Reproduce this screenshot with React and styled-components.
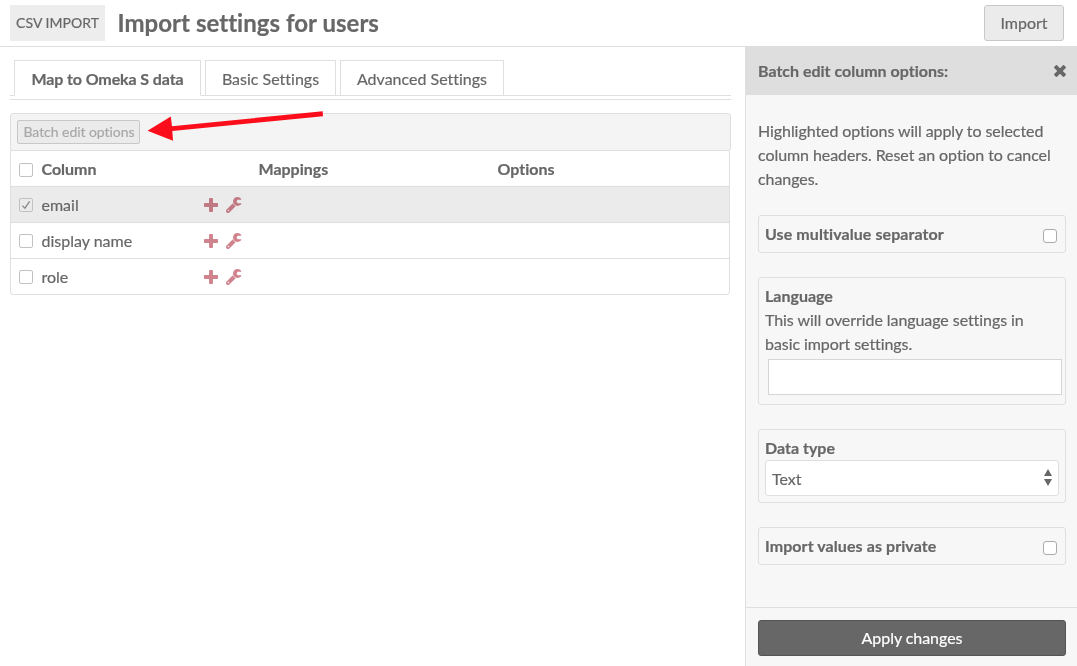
import React from 'react';
import styled, { createGlobalStyle, css } from 'styled-components';

const line = '#dfdfdf';
const ink = '#676767';

const heavy = css`
  font-weight: 700;
  letter-spacing: ${(p) => p.$track || 0}px;
`;

const GlobalStyle = createGlobalStyle`
  *, *::before, *::after { box-sizing: border-box; }
  body {
    margin: 0;
    background: #fff;
    color: ${ink};
    font: 16px/24px Lato, sans-serif;
    font-variant-ligatures: none;
    -webkit-text-stroke: 0.2px currentColor;
    overflow: hidden;
  }
  button, input { font: inherit; color: inherit; font-variant-ligatures: none; }
  h1, h2, p { margin: 0; }
`;

const Page = styled.div`
  display: flex;
  flex-direction: column;
  height: 666px;
`;

const Header = styled.header`
  display: flex;
  align-items: flex-start;
  height: 46px;
  padding: 5px 13px 0 10px;
`;

const SectionTag = styled.span`
  width: 95px;
  height: 36px;
  background: #ededed;
  font-size: 14px;
  line-height: 36px;
  letter-spacing: 0.03px;
  text-align: center;
  white-space: nowrap;
`;

const Title = styled.h1`
  flex: 1;
  margin-left: 12.5px;
  font-size: 24px;
  line-height: 36px;
  letter-spacing: 0.03px;
`;

const Button = styled.button`
  width: 80px;
  height: 36px;
  padding: 0;
  border: 1px solid #c8c8c8;
  border-radius: 3px;
  background: #ebebeb;
`;

const Body = styled.div`
  display: flex;
  flex: 1;
  min-height: 0;
`;

const Main = styled.main`
  flex: none;
  width: 745px;
  padding: 13px 14px 0 10px;
  border-top: 1px solid ${line};
`;

const Tabs = styled.nav`
  display: flex;
  gap: 4px;
  height: 36px;
  padding-left: 4px;
  box-shadow: inset 0 -1px ${line};
`;

const Tab = styled.a`
  width: ${(p) => p.$width}px;
  padding-top: 6px;
  border: 1px solid ${line};
  border-bottom-color: ${(p) => (p.$active ? '#fff' : line)};
  text-align: center;
  white-space: nowrap;
  ${(p) => p.$active && heavy}
`;

const Rule = styled.div`
  height: 1px;
  margin: 3px 0 13px;
  background: ${line};
`;

const BatchBar = styled.div`
  height: 38px;
  padding: 6px;
  border: 1px solid ${line};
  border-radius: 3px;
  background: #f4f4f4;
  display: flex;
  position: relative;
`;

const BatchButton = styled.button`
  width: 123px;
  height: 24px;
  padding: 0 0 0 1px;
  border: 1px solid #c8c8c8;
  border-radius: 2px;
  background: #ebebeb;
  color: #a8a8a8;
  font-size: 14px;
  line-height: 22px;
  letter-spacing: -0.05px;
`;

const Arrow = styled.svg`
  position: absolute;
  left: 134px;
  top: -6px;
`;

const Table = styled.div`
  width: 720px;
  margin-top: -1px;
  border: 1px solid ${line};
  border-radius: 0 0 3px 3px;
  position: relative;
`;

const Box = styled.span`
  display: flex;
  align-items: center;
  justify-content: center;
  width: 14px;
  height: 14px;
  margin-top: 1px;
  border: 1px solid ${(p) => (p.$strong ? '#aaa' : '#c2c2c2')};
  border-radius: ${(p) => (p.$strong ? 3 : 2)}px;
  background: ${(p) => (p.$dim ? 'transparent' : '#fff')};
  color: #8a8a8a;
`;

const Row = styled.div`
  display: grid;
  grid-template-columns: 193px 54.5px 239px 1fr;
  align-items: center;
  height: 36px;
  background: ${(p) => (p.$selected ? '#ebebeb' : 'transparent')};
  ${(p) => p.$head && heavy}

  & + & {
    border-top: 1px solid ${line};
  }
  &:first-child {
    height: 35px;
  }
  &:first-child ${Box} {
    margin-top: 2px;
  }
`;

const NameCell = styled.label`
  display: flex;
  align-items: center;
  gap: 8.5px;
  padding-left: 8px;
`;

const Actions = styled.span`
  display: flex;
  align-items: center;
  gap: 8px;
  color: #d1838d;
  mix-blend-mode: multiply;
`;

const Sidebar = styled.aside`
  flex: 1;
  min-width: 0;
  display: flex;
  flex-direction: column;
  border-left: 1px solid ${line};
  background: #f7f7f7;
`;

const SideHeader = styled.div`
  display: flex;
  align-items: center;
  justify-content: space-between;
  height: 49px;
  padding: 0 11px 0 12px;
  background: #dedede;
`;

const SideTitle = styled.h2`
  font-size: 16px;
  line-height: 24px;
  ${heavy}
`;

const SideContent = styled.div`
  flex: 1;
  padding: 24px 11px 0 12px;
`;

const Note = styled.p`
  letter-spacing: -0.07px;
`;

const Intro = styled(Note)`
  margin-bottom: 24px;
`;

const Field = styled.div`
  height: ${(p) => p.$height}px;
  margin-bottom: 24px;
  padding: 6px;
  border: 1px solid ${line};
  border-radius: 3px;
`;

const InlineField = styled(Field)`
  display: flex;
  justify-content: space-between;
  padding-right: 8px;

  ${Box} {
    margin-top: 7px;
  }
`;

const Label = styled.div`
  ${heavy}
`;

const TextInput = styled.input`
  display: block;
  width: 294px;
  height: 36px;
  margin: 3px 0 0 3px;
  border: 1px solid #d5d5d5;
  background: #fff;
`;

const Select = styled.div`
  display: flex;
  align-items: center;
  justify-content: space-between;
  width: 294px;
  height: 36px;
  padding: 2px 6px 0;
  border: 1px solid ${line};
  border-radius: 3px;
  background: #fff;

  svg {
    margin-top: -3px;
  }
`;

const SideFooter = styled.div`
  height: 59px;
  padding: 12px 11px 0 12px;
  border-top: 1px solid ${line};
`;

const ApplyButton = styled(Button)`
  width: 100%;
  border-color: #555;
  background: #676767;
  color: #fff;
  letter-spacing: -0.05px;
`;

const PlusIcon = () => (
  <svg width="14" height="16" viewBox="0 0 448 512" fill="currentColor">
    <path d="M448 294.2v-76.4c0-13.3-10.7-24-24-24H286.2V56c0-13.3-10.7-24-24-24h-76.4c-13.3 0-24 10.7-24 24v137.8H24c-13.3 0-24 10.7-24 24v76.4c0 13.3 10.7 24 24 24h137.8V456c0 13.3 10.7 24 24 24h76.4c13.3 0 24-10.7 24-24V318.2H424c13.3 0 24-10.7 24-24z" />
  </svg>
);

const WrenchIcon = () => (
  <svg width="16" height="16" viewBox="0 0 512 512" fill="currentColor">
    <path d="M481.156 200c9.3 0 15.12 10.155 10.325 18.124C466.295 259.992 420.419 288 368 288c-79.222 0-143.501-63.974-143.997-143.079C223.505 65.469 288.548-.001 368.002 0c52.362.001 98.196 27.949 123.4 69.743C496.24 77.766 490.523 88 481.154 88H376l-40 56 40 56h105.156zm-171.649 93.003L109.255 493.255c-24.994 24.993-65.515 24.994-90.51 0-24.993-24.994-24.993-65.516 0-90.51L218.991 202.5c16.16 41.197 49.303 74.335 90.516 90.503zM104 432c0-13.255-10.745-24-24-24s-24 10.745-24 24 10.745 24 24 24 24-10.745 24-24z" />
  </svg>
);

const CloseIcon = () => (
  <svg width="12" height="16" viewBox="0 0 384 512" fill="currentColor">
    <path d="M323.1 441l53.9-53.9c9.4-9.4 9.4-24.5 0-33.9L279.8 256l97.2-97.2c9.4-9.4 9.4-24.5 0-33.9L323.1 71c-9.4-9.4-24.5-9.4-33.9 0L192 168.2 94.8 71c-9.4-9.4-24.5-9.4-33.9 0L7 124.9c-9.4 9.4-9.4 24.5 0 33.9l97.2 97.2L7 353.2c-9.4 9.4-9.4 24.5 0 33.9L60.9 441c9.4 9.4 24.5 9.4 33.9 0l97.2-97.2 97.2 97.2c9.3 9.3 24.5 9.3 33.9 0z" />
  </svg>
);

const CheckIcon = () => (
  <svg width="10" height="10" viewBox="0 0 10 10" fill="none" stroke="currentColor" strokeWidth="1.3">
    <path d="M1.4 5.6 3.9 8.2 8.6 1.4" />
  </svg>
);

const SortIcon = () => (
  <svg width="8" height="17" viewBox="0 0 8 17" fill="currentColor">
    <path d="M4 0 8 7H0zM0 10h8l-4 7z" />
  </svg>
);

const columns = [
  { name: 'email', selected: true },
  { name: 'display name' },
  { name: 'role' },
];

export default function App() {
  return (
    <Page>
      <GlobalStyle />
      <Header>
        <SectionTag>CSV IMPORT</SectionTag>
        <Title>Import settings for users</Title>
        <Button>Import</Button>
      </Header>
      <Body>
        <Main>
          <Tabs>
            <Tab $active $width={187} $track={-0.1}>Map to Omeka S data</Tab>
            <Tab $width={131}>Basic Settings</Tab>
            <Tab $width={164}>Advanced Settings</Tab>
          </Tabs>
          <Rule />
          <BatchBar>
            <BatchButton disabled>Batch edit options</BatchButton>
            <Arrow width="180" height="35" viewBox="145 108 180 35">
              <path d="M322.7 111.3 172 126.2 170.8 116.4 147.5 130.8 173 140.8 172.3 131 323 116.3z" fill="#fb0d1b" />
            </Arrow>
          </BatchBar>
          <Table>
            <Row $head>
              <NameCell><Box />Column</NameCell>
              <span />
              <span>Mappings</span>
              <span>Options</span>
            </Row>
            {columns.map((c) => (
              <Row key={c.name} $selected={c.selected}>
                <NameCell>
                  <Box $dim={c.selected}>{c.selected && <CheckIcon />}</Box>
                  {c.name}
                </NameCell>
                <Actions><PlusIcon /><WrenchIcon /></Actions>
              </Row>
            ))}
          </Table>
        </Main>
        <Sidebar>
          <SideHeader>
            <SideTitle>Batch edit column options:</SideTitle>
            <CloseIcon />
          </SideHeader>
          <SideContent>
            <Intro>
              Highlighted options will apply to selected column headers. Reset an option to cancel changes.
            </Intro>
            <InlineField $height={38}>
              <Label $track={0.08}>Use multivalue separator</Label>
              <Box $strong />
            </InlineField>
            <Field $height={128}>
              <Label>Language</Label>
              <Note>This will override language settings in basic import settings.</Note>
              <TextInput />
            </Field>
            <Field $height={74}>
              <Label>Data type</Label>
              <Select>Text<SortIcon /></Select>
            </Field>
            <InlineField $height={38}>
              <Label $track={0.08}>Import values as private</Label>
              <Box $strong />
            </InlineField>
          </SideContent>
          <SideFooter>
            <ApplyButton>Apply changes</ApplyButton>
          </SideFooter>
        </Sidebar>
      </Body>
    </Page>
  );
}
